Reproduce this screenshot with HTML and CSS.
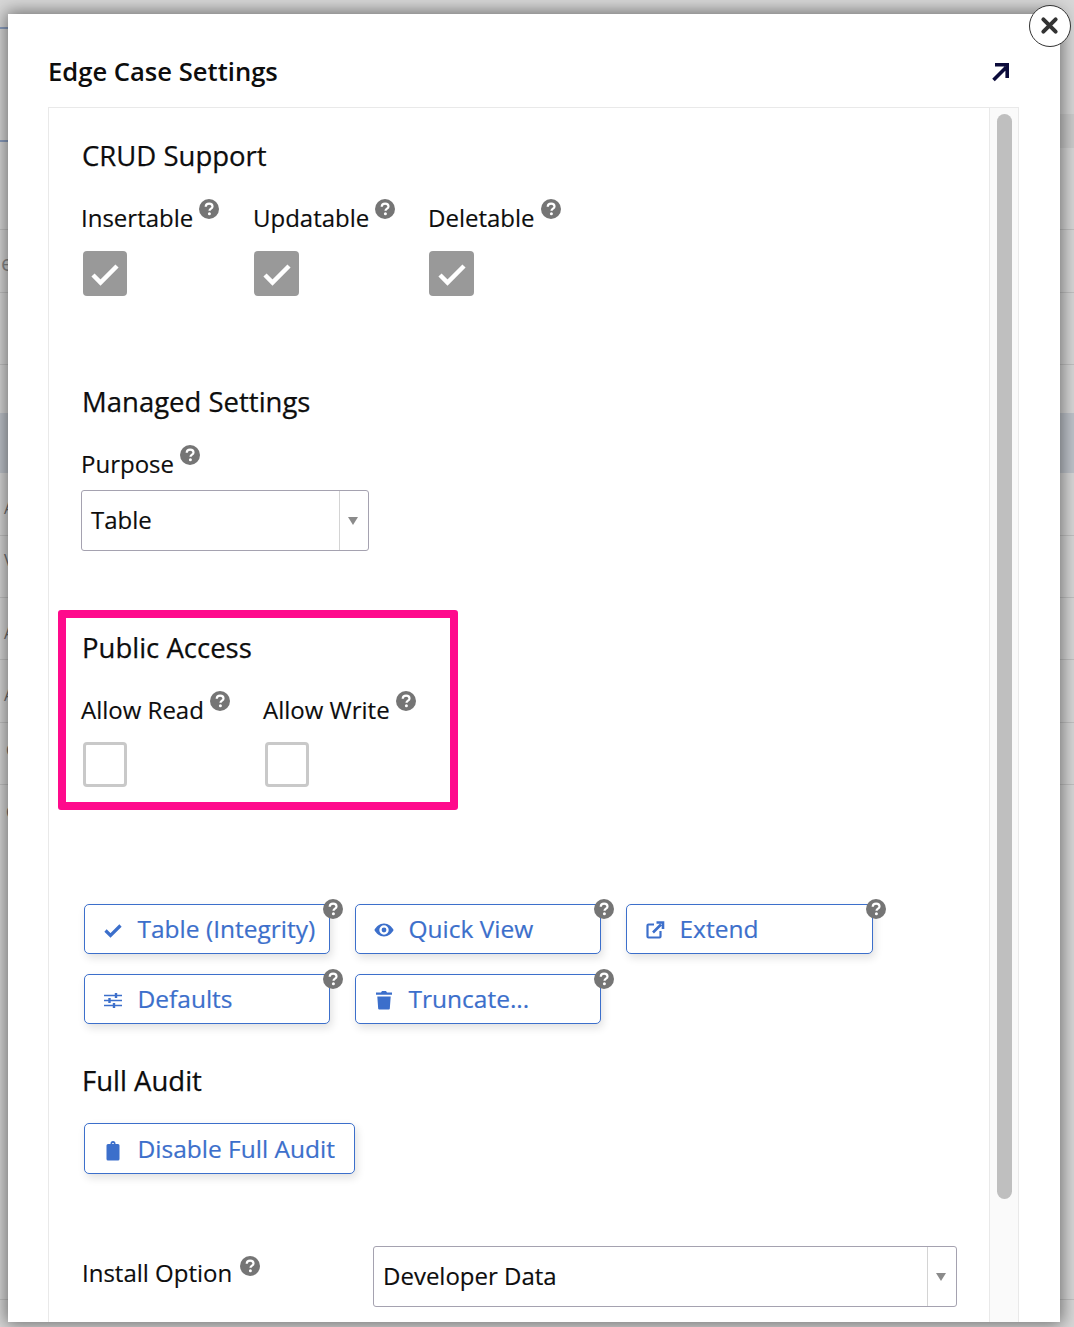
FILE: index.html
```html
<!DOCTYPE html>
<html lang="en">
<head>
<meta charset="utf-8">
<title>Edge Case Settings</title>
<link rel="stylesheet" href="styles.css">
</head>
<body>
<div class="backdrop" aria-hidden="true">
  <i class="rule blue r1"></i><i class="rule blue r2"></i><i class="strip"></i><i class="rule r3"></i><i class="rule r4"></i><i class="rule r4b"></i><i class="band"></i><i class="rule r6"></i><i class="rule r7"></i><i class="rule r8"></i><i class="rule r9"></i><i class="rule r10"></i><i class="rule r11"></i>
  <span class="frag f1">e</span><span class="frag f2">A</span><span class="frag f3">V</span><span class="frag f4">A</span><span class="frag f5">A</span><span class="frag f6">C</span><span class="frag f7">C</span>
</div>
<button class="close" aria-label="Close">
  <svg viewBox="0 0 24 24" width="21" height="21"><path d="M5 5l14 14M19 5L5 19" fill="none" stroke="#333" stroke-width="4.6" stroke-linecap="round"/></svg>
</button>
<main class="modal">
  <header class="modal-head">
    <h1>Edge Case Settings</h1>
    <svg class="expand" viewBox="0 0 20 20" width="20" height="20"><path d="M2.500 18L15 5.500M4 2.800H16.200V16" fill="none" stroke="#0b0b3b" stroke-width="3.600"/></svg>
  </header>
  <div class="panel">
    <div class="content">
      <section class="crud">
        <h2>CRUD Support</h2>
        <div class="fields">
          <div class="field w-ins"><label>Insertable<svg class="help"><use href="#q"/></svg></label><span class="check on first"><svg viewBox="0 0 44 44" width="44" height="44"><path d="M10 23l7.500 7.500L34 14" fill="none" stroke="#fff" stroke-width="4.500"/></svg></span></div>
          <div class="field w-upd"><label>Updatable<svg class="help"><use href="#q"/></svg></label><span class="check on wide"><svg viewBox="0 0 44 44" width="44" height="44"><path d="M10 23l7.500 7.500L34 14" fill="none" stroke="#fff" stroke-width="4.500"/></svg></span></div>
          <div class="field"><label>Deletable<svg class="help"><use href="#q"/></svg></label><span class="check on wide"><svg viewBox="0 0 44 44" width="44" height="44"><path d="M10 23l7.500 7.500L34 14" fill="none" stroke="#fff" stroke-width="4.500"/></svg></span></div>
        </div>
      </section>
      <section class="managed">
        <h2>Managed Settings</h2>
        <label>Purpose<svg class="help"><use href="#q"/></svg></label>
        <div class="select small"><span>Table</span><b><i></i></b></div>
      </section>
      <section class="public">
        <h2>Public Access</h2>
        <div class="fields">
          <div class="field w-read"><label>Allow Read<svg class="help"><use href="#q"/></svg></label><span class="check"></span></div>
          <div class="field"><label>Allow Write<svg class="help"><use href="#q"/></svg></label><span class="check"></span></div>
        </div>
      </section>
      <section class="actions">
        <a class="btn"><svg viewBox="0 0 20 20"><path d="M2.500 10.500l5 5 10-10" fill="none" stroke="currentColor" stroke-width="3.200"/></svg><span>Table (Integrity)</span><svg class="help pin"><use href="#q"/></svg></a>
        <a class="btn"><svg viewBox="0 0 20 20"><path fill="currentColor" fill-rule="evenodd" d="M10 3.500C5.600 3.500 2 6.900.4 10c1.600 3.100 5.200 6.500 9.600 6.500s8-3.400 9.600-6.500C18 6.900 14.400 3.500 10 3.500zm0 1.800a4.700 4.700 0 1 1 0 9.400 4.700 4.700 0 0 1 0-9.400zm0 2.300a2.400 2.400 0 1 0 0 4.800 2.400 2.400 0 0 0 0-4.800z"/></svg><span>Quick View</span><svg class="help pin"><use href="#q"/></svg></a>
        <a class="btn ext"><svg viewBox="0 0 20 20"><path d="M9 4.500H3.500a1 1 0 0 0-1 1v11a1 1 0 0 0 1 1h11a1 1 0 0 0 1-1V11" fill="none" stroke="currentColor" stroke-width="2.200"/><path d="M8 12.500L16 4.500M11.500 2.500h6.500V9" fill="none" stroke="currentColor" stroke-width="2.600"/></svg><span>Extend</span><svg class="help pin"><use href="#q"/></svg></a>
        <a class="btn"><svg viewBox="0 0 20 20"><path d="M1 5.500h18M1 10.500h18M1 15.500h18" stroke="currentColor" stroke-width="1.700" fill="none"/><path d="M13 3v5M6.500 8v5M11 13v5" stroke="currentColor" stroke-width="2.400" fill="none"/></svg><span>Defaults</span><svg class="help pin"><use href="#q"/></svg></a>
        <a class="btn"><svg viewBox="0 0 20 20"><path fill="currentColor" d="M2 2.500h5L8 1h4l1 1.500h5v2.300H2zM3.300 6.500h13.400l-.9 12.200a1 1 0 0 1-1 .8H5.200a1 1 0 0 1-1-.8z"/></svg><span>Truncate...</span><svg class="help pin"><use href="#q"/></svg></a>
      </section>
      <section class="audit">
        <h2>Full Audit</h2>
        <a class="btn auto"><svg viewBox="0 0 20 20"><path fill="currentColor" fill-rule="evenodd" d="M7.500 3V2.500a2.500 2.500 0 0 1 5 0V3H15a1.500 1.500 0 0 1 1.500 1.500V18a1.500 1.500 0 0 1-1.500 1.500H5A1.500 1.500 0 0 1 3.500 18V4.500A1.500 1.500 0 0 1 5 3zM9 3h2V2.300H9z"/></svg><span>Disable Full Audit</span></a>
      </section>
      <section class="install">
        <label>Install Option<svg class="help"><use href="#q"/></svg></label>
        <div class="select large"><span>Developer Data</span><b><i></i></b></div>
      </section>
    </div>
    <div class="track"><div class="thumb"></div></div>
  </div>
</main>
<svg class="defs" width="0" height="0" aria-hidden="true"><defs><symbol id="q" viewBox="0 0 20 20"><circle cx="10" cy="10" r="10" fill="#757575"/><path d="M6.700 7.700c.1-2 1.500-3.100 3.400-3.100 2 0 3.400 1.100 3.400 2.800 0 2.300-3 2.300-3 4.400" fill="none" stroke="#fff" stroke-width="2.200"/><circle cx="10.400" cy="14.800" r="1.500" fill="#fff"/></symbol></defs></svg>
</body>
</html>
```
FILE: styles.css
```css
* { box-sizing: border-box; }
html, body { margin: 0; height: 100%; }
body {
  position: relative;
  height: 1327px;
  overflow: hidden;
  background: #d8d8d8;
  font-family: "Open Sans", "Liberation Sans", sans-serif;
  color: #0d0d0d;
}
.backdrop { position: absolute; inset: 0; }
.rule { position: absolute; left: 0; right: 0; height: 1px; background: #c2c2c2; }
.rule.blue { height: 2px; background: #8c9fc0; width: 10px; }
.r1 { top: 27px; } .r2 { top: 140px; }
.strip { position: absolute; right: 0; width: 20px; top: 114px; height: 34px; background: #cdcdcd; }
.r3 { top: 229px; } .r4 { top: 292px; } .r4b { top: 364px; }
.band { position: absolute; left: 0; right: 0; top: 413px; height: 60px; background: #bfc4cb; }
.r6 { top: 535px; } .r7 { top: 597px; } .r8 { top: 659px; } .r9 { top: 722px; } .r10 { top: 784px; } .r11 { top: 1299px; }
.frag { position: absolute; font-size: 16px; line-height: 18px; color: #6d6d6d; }
.f1 { left: 1px; top: 251px; font-size: 22px; line-height: 22px; color: #8a8a8a; }
.f2 { left: 4px; top: 499px; } .f3 { left: 4px; top: 551px; } .f4 { left: 4px; top: 624px; }
.f5 { left: 4px; top: 686px; } .f6 { left: 6px; top: 741px; } .f7 { left: 6px; top: 803px; }

.modal {
  position: relative;
  margin: 14px 14px 0 8px;
  height: 1308px;
  width: 1052px;
  background: #fff;
  box-shadow: 0 0 16px 2px rgba(0, 0, 0, .5);
  display: flex;
  flex-direction: column;
  padding: 0 41px 0 40px;
}
.close {
  position: absolute;
  z-index: 2;
  left: 1028.5px;
  top: 4.5px;
  width: 42px;
  height: 42px;
  padding: 0;
  border-radius: 50%;
  border: 1.500px solid #333;
  background: #fff;
  display: flex;
  align-items: center;
  justify-content: center;
}
.modal-head {
  height: 93px;
  flex: none;
  display: flex;
  align-items: center;
  justify-content: space-between;
  padding-top: 23px;
}
h1 { margin: 0; font-size: 25.6px; font-weight: 600; line-height: 34px; }
.expand { margin-right: 8px; margin-top: -1px; }
.panel {
  flex: 1;
  min-height: 0;
  display: flex;
  border: 1px solid #e9e9e9;
  border-bottom: 0;
  width: 971px;
}
.content { flex: 1; min-width: 0; padding: 31px 0 0 32px; overflow: hidden; }
.track {
  width: 29px;
  flex: none;
  background: #fafafa;
  border-left: 1px solid #e9e9e9;
  padding: 6px 6px 0 7px;
}
.thumb { height: 1085px; border-radius: 8px; background: #bfbfbf; }

h2 { margin: 0 0 0 1px; font-size: 27.5px; font-weight: 500; line-height: 34px; -webkit-text-stroke: .25px #0d0d0d; }
label { display: block; font-size: 24px; line-height: 32px; white-space: nowrap; -webkit-text-stroke: .15px #0d0d0d; }
.help { display: inline-block; width: 20px; height: 20px; margin-left: 6px; vertical-align: 8px; }
.fields { display: flex; margin-top: 26px; }
.crud .fields { margin-left: -1px; }
.field label { margin-left: 1px; }
.w-ins { width: 172px; }
.w-upd { width: 175px; }
.w-read { width: 182px; }
.check {
  display: flex;
  align-items: center;
  justify-content: center;
  width: 44px;
  height: 45px;
  margin: 17px 0 0 2px;
  border-radius: 4px;
  border: 3px solid #c9c9c9;
  background: #fff;
}
.check.on { background: #999; border: 0; }
.check.first { margin-left: 3px; }
.check.wide { width: 45px; }

.crud { height: 246px; }
.managed { height: 225px; }
.managed label { margin-top: 26px; }
.select {
  display: flex;
  align-items: stretch;
  height: 61px;
  margin-top: 10px;
  border: 1px solid #a5a2b0;
  border-radius: 3px;
  background: #fff;
  font-size: 24px;
  -webkit-text-stroke: .15px #0d0d0d;
}
.select span { flex: 1; padding: 0 9px; line-height: 58px; }
.select b { width: 29px; flex: none; border-left: 1px solid #d4d4d4; display: flex; align-items: center; justify-content: center; padding-right: 2px; }
.select i { width: 0; height: 0; border: 5px solid transparent; border-top: 8px solid #8b8b8b; border-bottom: 0; }
.select.small { width: 288px; }
.select.large { width: 584px; margin: 0 0 0 112px; }

.public {
  width: 400px;
  height: 200px;
  margin-left: -23px;
  border: 8px solid #ff0a8c;
  border-radius: 3px;
  padding: 13px 0 0 14px;
}
.public h2 { margin-left: 2px; }
.public .fields { margin-top: 26px; }
.public .check { margin-top: 16px; margin-left: 3px; }

.actions {
  display: grid;
  grid-template-columns: 246px 246px 247px;
  column-gap: 25px;
  row-gap: 20px;
  margin: 94px 0 0 3px;
  width: 800px;
}
.btn {
  position: relative;
  display: flex;
  align-items: center;
  height: 50px;
  padding: 0 12px 2px 18px;
  border: 1.500px solid #3c6fcb;
  border-radius: 5px;
  background: #fff;
  color: #3c6fcb;
  font-size: 24.5px;
  font-weight: 500;
  white-space: nowrap;
  box-shadow: 2px 4px 8px rgba(0, 0, 0, .12);
  -webkit-text-stroke: .2px #3c6fcb;
}
.btn > svg:first-child { width: 20px; height: 20px; flex: none; margin: 4px 14.5px 0 0; }
.help.pin { position: absolute; top: -6px; right: -14px; margin: 0; }
.btn.auto { width: 271px; height: 51px; padding-bottom: 0; }

.audit { margin: 40px 0 0 3px; }
.audit h2 { margin-left: -2px; }
.audit .btn { margin-top: 25px; }
.install { display: flex; margin-top: 72px; margin-left: 1px; }
.install label { width: 179px; flex: none; padding-top: 8px; }
.install .help { position: relative; left: 2px; top: 2px; }
.install .select { margin-left: 112px; }
.defs { position: absolute; }
```
